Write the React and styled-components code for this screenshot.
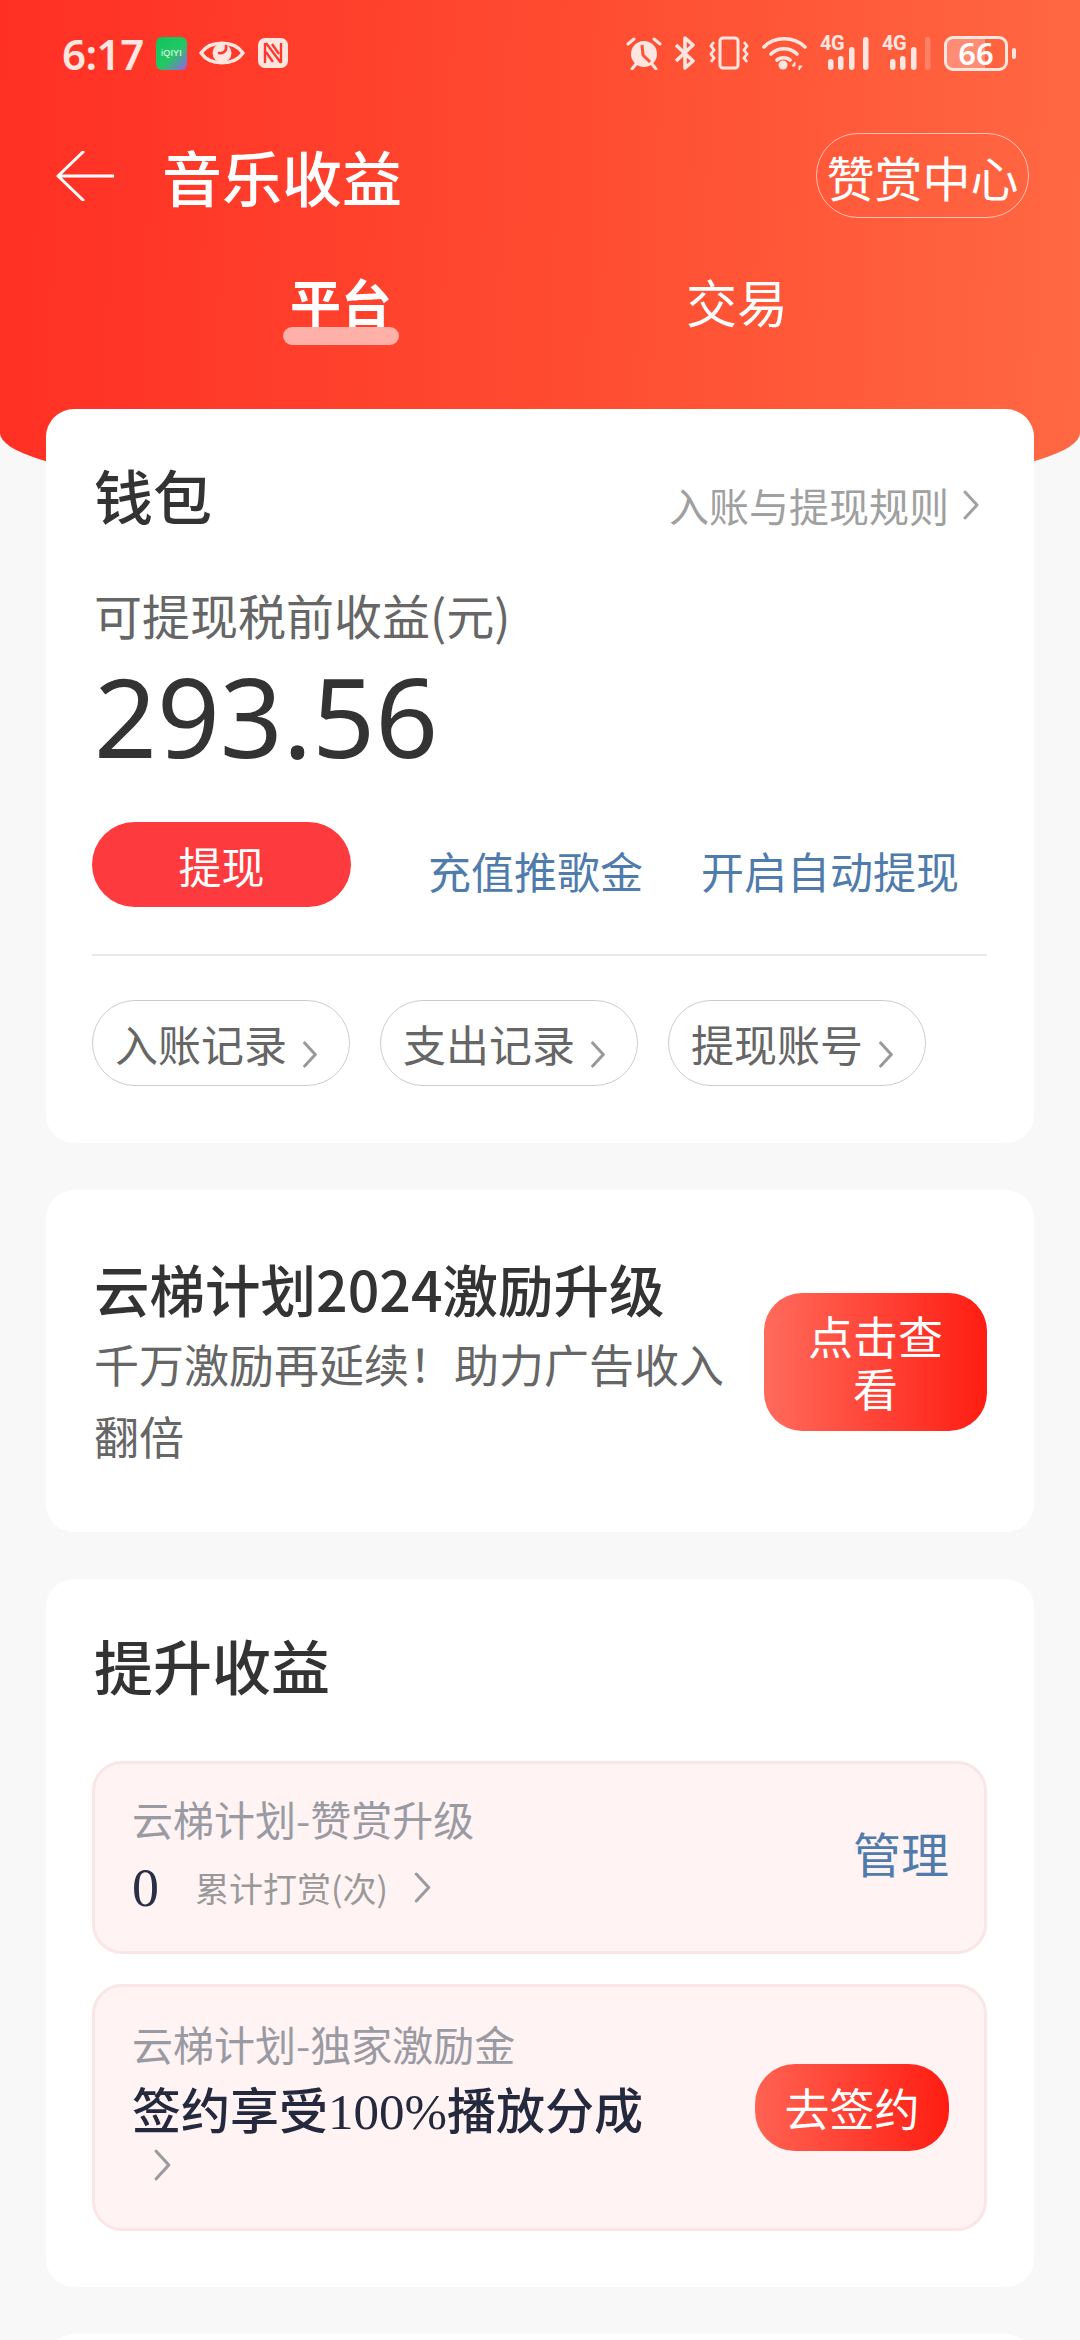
import styled, { createGlobalStyle } from "styled-components";

const GlobalStyle = createGlobalStyle`
  html, body {
    margin: 0;
    padding: 0;
    background: #f8f8f8;
  }
  body {
    width: 1080px;
    height: 2340px;
    overflow: hidden;
    font-family: "Noto Sans CJK SC", "Noto Sans", sans-serif;
  }
`;

function Chevron({ color = "#999", width = 18, height = 30, strokeWidth = 3 }) {
  return (
    <ChevronSvg width={width} height={height} viewBox="0 0 18 30" fill="none">
      <polyline
        points="3,2 15,15 3,28"
        stroke={color}
        strokeWidth={strokeWidth}
        strokeLinecap="round"
        strokeLinejoin="round"
      />
    </ChevronSvg>
  );
}

function StatusIcons() {
  const ink = "#ffe6e0";
  return (
    <StatusRight>
      <svg width="36" height="34" viewBox="0 0 36 34" fill="none">
        <circle cx="18" cy="18" r="13" fill={ink} />
        <path d="M16 9l1 10 7 7" stroke="#ff5238" strokeWidth="3" />
        <path d="M2 8l6-5M34 8l-6-5M6 33l4-5M30 33l-4-5" stroke={ink} strokeWidth="3" strokeLinecap="round" />
      </svg>
      <svg width="22" height="34" viewBox="0 0 22 34" fill="none">
        <path d="M2 9l17 16-8 7V2l8 7L2 25" stroke={ink} strokeWidth="3.6" strokeLinejoin="round" />
      </svg>
      <svg width="42" height="34" viewBox="0 0 42 34" fill="none">
        <rect x="12" y="2" width="18" height="30" rx="3" stroke={ink} strokeWidth="3" />
        <path d="M6 6l-3 4 3 4-3 4 3 4-3 4M36 6l3 4-3 4 3 4-3 4 3 4" stroke={ink} strokeWidth="2.8" />
      </svg>
      <svg width="46" height="34" viewBox="0 0 46 34" fill="none">
        <path d="M2 11C12 0 32 0 43 11M9 18c7-7 19-7 26 0M15 24c3-3 10-3 13 0" stroke={ink} strokeWidth="3.6" strokeLinecap="round" />
        <circle cx="21" cy="29" r="4.5" fill={ink} />
        <path d="M33 26l-3 4h3zM37 34l3-4h-3z" fill={ink} stroke={ink} />
      </svg>
      <NetworkIcon ink={ink} />
      <NetworkIcon ink={ink} dim />
      <Battery>
        <BatteryBody>66</BatteryBody>
        <BatteryNub />
      </Battery>
    </StatusRight>
  );
}

function NetworkIcon({ ink, dim }) {
  return (
    <Network>
      <NetworkLabel>4G</NetworkLabel>
      <svg width="50" height="34" viewBox="0 0 50 34" fill="none">
        <rect x="8" y="23" width="5.5" height="11" rx="2.7" fill={ink} />
        <rect x="18" y="20" width="5.5" height="14" rx="2.7" fill={ink} />
        <rect x="29" y="11" width="5.5" height="23" rx="2.7" fill={ink} />
        <rect x="43" y="1" width="5.5" height="33" rx="2.7" fill={ink} opacity={dim ? 0.25 : 1} />
      </svg>
    </Network>
  );
}

export default function App() {
  return (
    <Page>
      <GlobalStyle />
      <Header>
        <StatusBar>
          <Time>6:17</Time>
          <QiyiBadge>iQIYI</QiyiBadge>
          <svg width="46" height="30" viewBox="0 0 46 30" fill="none">
            <path d="M2 15C11 2 35 2 44 15 35 28 11 28 2 15z" stroke="#ffe6e0" strokeWidth="3.4" strokeLinejoin="round" />
            <circle cx="23" cy="15" r="9.5" fill="#ffe6e0" />
            <path d="M27 8c1 5-3 8-7 7" stroke="#ff3a2c" strokeWidth="2.6" strokeLinecap="round" />
          </svg>
          <svg width="32" height="32" viewBox="0 0 32 32" fill="none">
            <rect x="1" y="1" width="30" height="30" rx="7" fill="#ffe6e0" />
            <path d="M8 26V6M24 6v20M9 6l15 20M15 7l7 10M9 15l7 10" stroke="#ff3a2c" strokeWidth="2.4" />
          </svg>
          <StatusIcons />
        </StatusBar>
        <TitleRow>
          <svg width="58" height="50" viewBox="0 0 58 50" fill="none">
            <path d="M27 1L2 25l25 24M2 25h55" stroke="#fff" strokeWidth="3" strokeLinecap="round" strokeLinejoin="round" />
          </svg>
          <Title>音乐收益</Title>
          <OutlineButton>赞赏中心</OutlineButton>
        </TitleRow>
        <Tabs>
          <Tab $active>
            平台
            <TabMark />
          </Tab>
          <Tab>交易</Tab>
        </Tabs>
      </Header>

      <Content>
        <Card $pad="43px 48px 57px">
          <CardHead>
            <CardTitle>钱包</CardTitle>
            <RuleLink>
              入账与提现规则
              <Chevron color="#a0a0a0" />
            </RuleLink>
          </CardHead>
          <BalanceLabel>可提现税前收益(元)</BalanceLabel>
          <Balance>293.56</Balance>
          <ActionRow>
            <WithdrawButton>提现</WithdrawButton>
            <BlueLink>充值推歌金</BlueLink>
            <BlueLink>开启自动提现</BlueLink>
          </ActionRow>
          <Divider />
          <ChipRow>
            {["入账记录", "支出记录", "提现账号"].map((label) => (
              <Chip key={label}>
                {label}
                <ChipArrow>
                  <Chevron color="#999" width={16} height={27} strokeWidth={3.4} />
                </ChipArrow>
              </Chip>
            ))}
          </ChipRow>
        </Card>

        <Card $pad="62px 48px 60px">
          <PromoRow>
            <PromoText>
              <PromoTitle>云梯计划2024激励升级</PromoTitle>
              <PromoSub>千万激励再延续！助力广告收入翻倍</PromoSub>
            </PromoText>
            <PromoButton>点击查看</PromoButton>
          </PromoRow>
        </Card>

        <Card $pad="43px 48px 56px">
          <CardTitle>提升收益</CardTitle>
          <PanelStack>
            <Panel $h="193px">
              <PanelText $shift="-10px">
                <PanelLabel>云梯计划-赞赏升级</PanelLabel>
                <CountRow>
                  <Count>0</Count>
                  <CountLabel>累计打赏(次)</CountLabel>
                  <Chevron color="#9a9aa0" width={19} height={31} />
                </CountRow>
              </PanelText>
              <ManageLink>管理</ManageLink>
            </Panel>
            <Panel $h="247px">
              <PanelText $shift="-20px">
                <PanelLabel>云梯计划-独家激励金</PanelLabel>
                <SignTitle>
                  签约享受<SerifNum>100%</SerifNum>播放分成
                </SignTitle>
                <SignArrow>
                  <Chevron color="#9a9aa0" width={19} height={34} />
                </SignArrow>
              </PanelText>
              <SignButton>去签约</SignButton>
            </Panel>
          </PanelStack>
        </Card>

        <Card $pad="0" $h="120px" />
      </Content>
    </Page>
  );
}

const Page = styled.div`
  width: 1080px;
  height: 2340px;
  overflow: hidden;
  background: #f8f8f8;
`;

const Header = styled.header`
  height: 503px;
  box-sizing: border-box;
  background: linear-gradient(92deg, #ff2f24 0%, #ff4a30 50%, #ff6843 100%);
  border-radius: 0 0 540px 540px / 0 0 70px 70px;
  color: #fff;
`;

const StatusBar = styled.div`
  display: flex;
  align-items: center;
  gap: 12px;
  height: 106px;
  padding: 0 64px 0 62px;
  color: #ffe6e0;
`;

const Time = styled.span`
  flex: none;
  width: 82px;
  font-family: "Noto Sans", sans-serif;
  font-size: 42px;
  font-weight: 600;
  letter-spacing: -0.5px;
`;

const QiyiBadge = styled.span`
  display: flex;
  align-items: center;
  justify-content: center;
  width: 31px;
  height: 33px;
  border-radius: 6px;
  background: linear-gradient(135deg, #0fc35a 0%, #22c864 55%, #9a5cf0 100%);
  color: #fff;
  font-family: "Liberation Sans", sans-serif;
  font-size: 9px;
  letter-spacing: 0.2px;
`;

const StatusRight = styled.div`
  display: flex;
  align-items: center;
  gap: 12px;
  margin-left: auto;
`;

const Network = styled.div`
  position: relative;
  width: 50px;
  height: 34px;
`;

const NetworkLabel = styled.span`
  position: absolute;
  left: 0;
  top: -3px;
  font-family: "Roboto", sans-serif;
  font-size: 20px;
  font-weight: 700;
  line-height: 20px;
  letter-spacing: -0.5px;
`;

const Battery = styled.div`
  display: flex;
  align-items: center;
  gap: 4px;
`;

const BatteryBody = styled.span`
  display: flex;
  align-items: center;
  justify-content: center;
  box-sizing: border-box;
  width: 64px;
  height: 35px;
  border: 3px solid #ffe6e0;
  border-radius: 9px;
  background: linear-gradient(90deg, rgba(255, 255, 255, 0.28) 66%, transparent 66%);
  color: #fff;
  font-family: "Noto Sans", sans-serif;
  font-size: 31px;
  font-weight: 600;
  line-height: 29px;
`;

const BatteryNub = styled.span`
  width: 4px;
  height: 11px;
  border-radius: 2px;
  background: #ffe6e0;
`;

const TitleRow = styled.div`
  display: flex;
  align-items: center;
  height: 85px;
  margin-top: 27px;
  padding: 0 51px 0 56px;
`;

const Title = styled.h1`
  margin: 0 0 0 48px;
  font-size: 60px;
  font-weight: 500;
  line-height: 85px;
`;

const OutlineButton = styled.button`
  box-sizing: border-box;
  width: 213px;
  height: 85px;
  margin-left: auto;
  padding: 0;
  border: 1.5px solid rgba(255, 255, 255, 0.6);
  border-radius: 42px;
  background: none;
  color: #fff;
  font-family: inherit;
  font-size: 48px;
  white-space: nowrap;
`;

const Tabs = styled.nav`
  display: grid;
  grid-template-columns: 396px 396px;
  padding: 0 143px;
  margin-top: 51px;
`;

const Tab = styled.div`
  position: relative;
  text-align: center;
  font-size: 51px;
  line-height: 64px;
  font-weight: ${(p) => (p.$active ? 700 : 400)};
`;

const TabMark = styled.span`
  position: absolute;
  left: 50%;
  bottom: -12px;
  width: 116px;
  height: 18px;
  margin-left: -58px;
  border-radius: 9px;
  background: #ffb0a8;
`;

const Content = styled.main`
  display: flex;
  flex-direction: column;
  gap: 47px;
  margin-top: -94px;
  padding: 0 46px;
  position: relative;
`;

const Card = styled.section`
  box-sizing: border-box;
  padding: ${(p) => p.$pad};
  min-height: ${(p) => p.$h || "auto"};
  border-radius: 28px;
  background: #fff;
`;

const CardHead = styled.div`
  display: flex;
  align-items: center;
  justify-content: space-between;
`;

const CardTitle = styled.h2`
  margin: 0;
  color: #333;
  font-size: 59px;
  font-weight: 500;
  line-height: 86px;
`;

const RuleLink = styled.span`
  display: flex;
  align-items: center;
  gap: 13px;
  padding: 20px 6px 0 0;
  color: #a0a0a0;
  font-size: 40px;
`;

const ChevronSvg = styled.svg`
  flex: none;
`;

const BalanceLabel = styled.div`
  margin-top: 46px;
  color: #666;
  font-size: 48px;
  line-height: 60px;
`;

const Balance = styled.div`
  margin-top: 11px;
  color: #333;
  font-family: "Noto Sans", sans-serif;
  font-size: 110px;
  line-height: 120px;
`;

const ActionRow = styled.div`
  display: flex;
  align-items: center;
  margin-top: 47px;
  margin-left: -2px;
`;

const WithdrawButton = styled.button`
  flex: none;
  width: 259px;
  height: 85px;
  margin-right: 77px;
  padding: 0;
  border: 0;
  border-radius: 43px;
  background: #fd3a3e;
  color: #fff;
  font-family: inherit;
  font-size: 43px;
`;

const BlueLink = styled.span`
  flex: none;
  margin-right: 58px;
  padding-top: 10px;
  color: #4f7cac;
  font-size: 43px;
  white-space: nowrap;
`;

const Divider = styled.hr`
  height: 2px;
  margin: 47px 0 0 -2px;
  width: 895px;
  border: 0;
  background: #e8e8e8;
`;

const ChipRow = styled.div`
  display: flex;
  gap: 30px;
  margin-top: 44px;
  margin-left: -2px;
`;

const Chip = styled.span`
  position: relative;
  box-sizing: border-box;
  display: flex;
  align-items: center;
  width: 258px;
  height: 86px;
  padding-left: 22px;
  border: 1.5px solid #ccc;
  border-radius: 43px;
  color: #666;
  font-size: 43px;
`;

const ChipArrow = styled.span`
  position: absolute;
  right: 31px;
  top: 40px;
  display: flex;
`;

const PromoRow = styled.div`
  display: flex;
  align-items: center;
  justify-content: space-between;
`;

const PromoText = styled.div`
  width: 640px;
`;

const PromoTitle = styled.div`
  margin-bottom: 4px;
  color: #333;
  font-size: 55.5px;
  font-weight: 500;
  line-height: 72px;
`;

const PromoSub = styled.div`
  color: #666;
  font-size: 45px;
  line-height: 72px;
`;

const PromoButton = styled.button`
  flex: none;
  width: 223px;
  height: 138px;
  margin-right: -1px;
  padding: 0 30px;
  border: 0;
  border-radius: 38px;
  background: linear-gradient(90deg, #ff6b5c 0%, #ff1d12 100%);
  color: #fff;
  font-family: inherit;
  font-size: 45px;
  line-height: 52px;
`;

const PanelStack = styled.div`
  display: flex;
  flex-direction: column;
  gap: 30px;
  margin: 53px 0 0 -2px;
  width: 895px;
`;

const Panel = styled.div`
  box-sizing: border-box;
  display: flex;
  align-items: center;
  justify-content: space-between;
  height: ${(p) => p.$h};
  padding: 0 35px 0 37px;
  border: 3px solid #fae6e6;
  border-radius: 30px;
  background: #fff3f3;
`;

const PanelText = styled.div`
  display: flex;
  flex-direction: column;
  margin-top: ${(p) => p.$shift};
`;

const PanelLabel = styled.div`
  color: #9a9aa3;
  font-size: 41px;
  line-height: 60px;
`;

const CountRow = styled.div`
  display: flex;
  align-items: center;
  height: 60px;
  margin-top: 10px;
`;

const Count = styled.span`
  width: 63px;
  color: #2a2f45;
  font-family: "Liberation Serif", serif;
  font-size: 54px;
`;

const CountLabel = styled.span`
  margin-right: 25px;
  color: #999;
  font-size: 34px;
`;

const ManageLink = styled.span`
  margin-top: -12px;
  color: #4f7cac;
  font-size: 48px;
`;

const SignTitle = styled.div`
  color: #24293e;
  font-size: 49px;
  font-weight: 500;
  line-height: 70px;
`;

const SerifNum = styled.span`
  font-family: "Liberation Serif", serif;
  font-size: 51px;
`;

const SignArrow = styled.span`
  display: flex;
  height: 36px;
  align-items: center;
  margin-left: 21px;
`;

const SignButton = styled.button`
  flex: none;
  width: 194px;
  height: 87px;
  padding: 0;
  border: 0;
  border-radius: 40px;
  background: linear-gradient(90deg, #ff6353 0%, #ff1d12 100%);
  color: #fff;
  font-family: inherit;
  font-size: 45px;
`;
